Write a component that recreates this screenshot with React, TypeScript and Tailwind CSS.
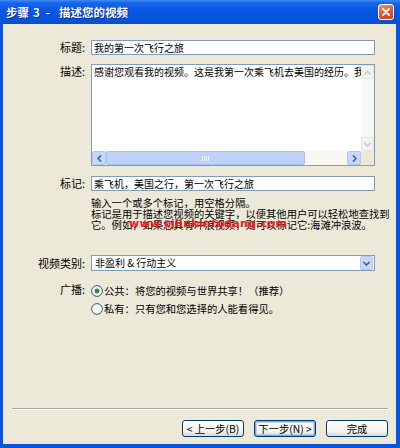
import React from "react";

const Chevron = ({ dir, color }: { dir: "up" | "down" | "left" | "right"; color: string }) => {
  const paths: Record<string, string> = {
    up: "M2 6 L4.5 3.5 L7 6",
    down: "M2 3.5 L4.5 6 L7 3.5",
    left: "M5.5 2 L3 4.5 L5.5 7",
    right: "M3.5 2 L6 4.5 L3.5 7",
  };
  return (
    <svg width="9" height="9" viewBox="0 0 9 9">
      <path d={paths[dir]} fill="none" stroke={color} strokeWidth="1.6" strokeLinecap="square" />
    </svg>
  );
};

const Radio = ({ checked }: { checked?: boolean }) => (
  <svg width="12" height="12" viewBox="0 0 12 12">
    <circle cx="6" cy="6" r="5.4" fill="#f6f6f3" stroke="#2f5a88" strokeWidth="1" />
    {checked && <circle cx="6" cy="6" r="2.4" fill="#2f8a3a" />}
  </svg>
);

export default function App() {
  return (
    <div className="w-[400px] h-[448px] flex flex-col bg-[#0a55e0] font-['Noto_Sans_CJK_SC','Noto_Sans',sans-serif] text-black overflow-hidden">
      {/* Title bar */}
      <div className="h-[24px] flex items-center justify-between pl-[6px] pr-[6px] bg-[linear-gradient(180deg,#3f8cf3_0%,#1766ea_12%,#0858e2_40%,#0653dc_80%,#0a4fc8_100%)]">
        <div className="flex items-center text-white font-bold text-[11.5px] leading-[14px] [text-shadow:1px_1px_0_#0a2f8a]">
          <span>步骤</span>
          <span className="ml-[4px]">3</span>
          <span className="ml-[6px]">-</span>
          <span className="ml-[9px]">描述您的视频</span>
        </div>
        <div className="w-[16px] h-[16px] rounded-[3px] border border-white flex items-center justify-center bg-[linear-gradient(160deg,#ee9a80_0%,#e0603f_40%,#c9401f_100%)]">
          <svg width="10" height="10" viewBox="0 0 10 10">
            <path d="M2 2 L8 8 M8 2 L2 8" stroke="white" strokeWidth="1.8" strokeLinecap="round" />
          </svg>
        </div>
      </div>

      {/* Body */}
      <div className="flex-1 ml-[3px] mr-[4px] mb-[4px] bg-[#ece9d8] flex flex-col pt-[16px]">
        {/* 标题 */}
        <div className="flex items-start">
          <div className="w-[82px] text-right text-[11px] leading-[15px]">标题:</div>
          <div className="ml-[6px] w-[284px] h-[15px] border border-[#7f9db9] bg-white text-[10px] leading-[13px] pl-[2px] whitespace-nowrap overflow-hidden">
            我的第一次飞行之旅
          </div>
        </div>

        {/* 描述 */}
        <div className="flex items-start mt-[9px]">
          <div className="w-[82px] text-right text-[11px] leading-[13px] pt-[1px]">描述:</div>
          <div className="ml-[6px] w-[284px] h-[102px] border border-[#7f9db9] bg-white flex flex-col">
            <div className="flex-1 flex">
              <div className="flex-1 text-[10px] leading-[12px] pl-[2px] pt-[1px] whitespace-nowrap overflow-hidden">
                感谢您观看我的视频。这是我第一次乘飞机去美国的经历。我
              </div>
              <div className="w-[13px] bg-[#f7f7f3] flex flex-col justify-between">
                <div className="h-[14px] border border-[#e4e4dc] rounded-[2px] bg-[#f3f3ee] flex items-center justify-center">
                  <Chevron dir="up" color="#c9cbd0" />
                </div>
                <div className="h-[14px] border border-[#e4e4dc] rounded-[2px] bg-[#f3f3ee] flex items-center justify-center">
                  <Chevron dir="down" color="#c9cbd0" />
                </div>
              </div>
            </div>
            <div className="h-[14px] flex">
              <div className="flex-1 flex bg-[#f8f7f2]">
                <div className="w-[14px] h-[14px] border border-[#b3c7f3] rounded-[2px] bg-[#c8d8fc] flex items-center justify-center">
                  <Chevron dir="left" color="#4d6185" />
                </div>
                <div className="w-[199px] h-[14px] border border-[#a9c0f2] rounded-[2px] bg-[#bdd1f9] flex items-center justify-center gap-[1px]">
                  <div className="w-[1px] h-[5px] bg-[#eef3fe]" />
                  <div className="w-[1px] h-[5px] bg-[#eef3fe]" />
                  <div className="w-[1px] h-[5px] bg-[#eef3fe]" />
                  <div className="w-[1px] h-[5px] bg-[#eef3fe]" />
                </div>
                <div className="flex-1" />
                <div className="w-[14px] h-[14px] border border-[#b3c7f3] rounded-[2px] bg-[#c8d8fc] flex items-center justify-center">
                  <Chevron dir="right" color="#4d6185" />
                </div>
              </div>
              <div className="w-[13px] bg-[#ece9d8]" />
            </div>
          </div>
        </div>

        {/* 标记 */}
        <div className="flex items-start mt-[10px]">
          <div className="w-[82px] text-right text-[11px] leading-[15px]">标记:</div>
          <div className="ml-[6px] w-[284px] h-[15px] border border-[#7f9db9] bg-white text-[10px] leading-[13px] pl-[2px] whitespace-nowrap overflow-hidden">
            乘飞机，美国之行，第一次飞行之旅
          </div>
        </div>

        {/* help text */}
        <div className="relative ml-[88px] mt-[6px] text-[10.3px] leading-[11px] whitespace-nowrap">
          <div>输入一个或多个标记，用空格分隔。</div>
          <div>标记是用于描述您视频的关键字，以便其他用户可以轻松地查找到</div>
          <div>它。例如，如果您具有冲浪视频，则可以标记它:海滩冲浪波。</div>
          <div className="absolute left-[38px] top-[21px] text-[11px] leading-[12px] font-bold text-[#ee1c1c] tracking-[0.3px] font-['DejaVu_Sans',sans-serif]">
            www.cjlinkinfodang.com
          </div>
        </div>

        {/* 视频类别 */}
        <div className="flex items-start mt-[25px]">
          <div className="w-[82px] text-right text-[11px] leading-[16px]">视频类别:</div>
          <div className="ml-[6px] w-[284px] h-[16px] border border-[#7f9db9] bg-white flex items-center">
            <div className="flex-1 text-[10px] leading-[14px] pl-[3px] whitespace-nowrap">非盈利 &amp; 行动主义</div>
            <div className="w-[13px] h-[14px] mr-[1px] border border-[#b3c7f3] rounded-[2px] bg-[#c8d8fc] flex items-center justify-center">
              <Chevron dir="down" color="#4d6185" />
            </div>
          </div>
        </div>

        {/* 广播 */}
        <div className="flex items-start mt-[12px]">
          <div className="w-[82px] text-right text-[11px] leading-[13px]">广播:</div>
          <div className="ml-[6px] flex flex-col gap-[5px] pt-[1px]">
            <div className="flex items-center h-[13px]">
              <Radio checked />
              <span className="ml-[1px] text-[10.3px] leading-[13px] whitespace-nowrap">公共：将您的视频与世界共享！（推荐）</span>
            </div>
            <div className="flex items-center h-[13px]">
              <Radio />
              <span className="ml-[1px] text-[10.3px] leading-[13px] whitespace-nowrap">私有：只有您和您选择的人能看得见。</span>
            </div>
          </div>
        </div>

        <div className="flex-1" />

        {/* separator */}
        <div className="ml-[9px] mr-[8px] h-[2px] border-t border-[#aca899] border-b border-b-white" />

        {/* buttons */}
        <div className="flex justify-end gap-[10px] pr-[8px] mt-[10px] mb-[7px]">
          <div className="w-[62px] h-[17px] rounded-[3px] border border-[#003c74] bg-[linear-gradient(180deg,#ffffff_0%,#f4f3ee_70%,#dcd7cb_100%)] flex items-center justify-center text-[10.3px] leading-[13px] whitespace-nowrap">
            &lt; 上一步(B)
          </div>
          <div className="w-[62px] h-[17px] rounded-[3px] border border-[#003c74] shadow-[inset_0_0_0_1px_#7ea6ee,inset_0_0_0_2px_#bcd1f7] bg-[linear-gradient(180deg,#ffffff_0%,#f4f3ee_70%,#dcd7cb_100%)] flex items-center justify-center text-[10.3px] leading-[13px] whitespace-nowrap">
            下一步(N) &gt;
          </div>
          <div className="w-[62px] h-[17px] rounded-[3px] border border-[#003c74] bg-[linear-gradient(180deg,#ffffff_0%,#f4f3ee_70%,#dcd7cb_100%)] flex items-center justify-center text-[10.3px] leading-[13px] whitespace-nowrap">
            完成
          </div>
        </div>
      </div>
    </div>
  );
}
